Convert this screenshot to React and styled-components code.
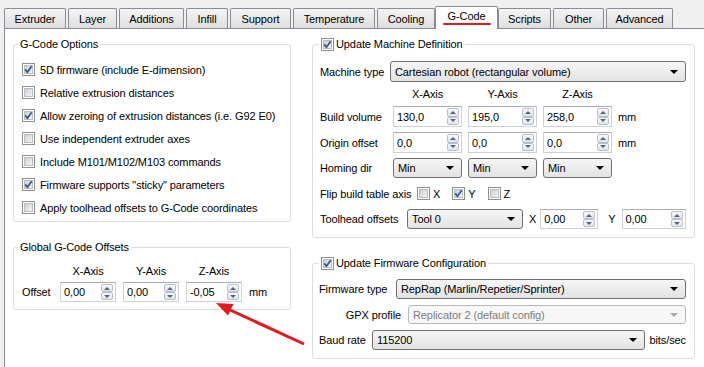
import React from "react";
import styled, { createGlobalStyle, css } from "styled-components";

const GlobalStyle = createGlobalStyle`
  html, body {
    margin: 0;
    background: #f0f0f0;
    font-family: "Liberation Sans", Arial, sans-serif;
    font-size: 11px;
    letter-spacing: -0.1px;
    color: #000;
  }
`;

const Window = styled.div`
  position: relative;
  width: 704px;
  height: 367px;
  overflow: hidden;
  background: #f0f0f0;
`;

const TabBar = styled.div`
  display: flex;
  align-items: flex-end;
  gap: 2px;
  height: 28px;
  padding-left: 4px;
`;

const Tab = styled.div`
  position: relative;
  flex: none;
  width: ${(p) => p.$w}px;
  height: 20px;
  box-sizing: border-box;
  border: 1px solid #898c95;
  border-bottom: none;
  border-radius: 2px 2px 0 0;
  background: linear-gradient(#f4f4f4, #e9e9e9 50%, #dedede);
  display: flex;
  align-items: center;
  justify-content: center;
  padding-top: 1px;
  ${(p) =>
    p.$active &&
    css`
      z-index: 2;
      width: ${p.$w + 4}px;
      height: 23px;
      margin: 0 -2px -1px;
      background: #fff;
      padding: 0 0 4px;
    `}
`;

const Mark = styled.span`
  position: absolute;
  left: 7px;
  right: 6px;
  bottom: 4px;
  height: 2px;
  border-radius: 1px;
  background: #e3191b;
`;

const Panel = styled.div`
  display: flex;
  align-items: flex-start;
  gap: 21px;
  width: 720px;
  height: 400px;
  box-sizing: border-box;
  margin-left: 4px;
  padding: 8px 0 0 8px;
  background: #fff;
  border: 1px solid #898c95;
`;

const Column = styled.div`
  flex: none;
  display: flex;
  flex-direction: column;
  gap: 18px;
  width: ${(p) => p.$w}px;
`;

const Group = styled.fieldset`
  margin: 0;
  min-width: 0;
  border: 1px solid #d5dfe5;
  border-radius: 3px;
  padding: ${(p) => p.$pad};
  display: flex;
  flex-direction: column;
  gap: ${(p) => p.$gap || 0}px;
`;

const Legend = styled.legend`
  display: flex;
  align-items: center;
  gap: 2px;
  height: 14px;
  line-height: 14px;
  padding: 0 2px;
  margin-left: ${(p) => p.$shift}px;
`;

const CheckRow = styled.div`
  display: flex;
  align-items: center;
  gap: 5px;
  height: 23px;
`;

const CheckSvg = styled.svg`
  flex: none;
  display: block;
`;

function Check({ on }) {
  return (
    <CheckSvg width="13" height="13" viewBox="0 0 13 13">
      <defs>
        <linearGradient id="ckfill" x1="0" y1="0" x2="1" y2="1">
          <stop offset="0" stopColor="#c9ccd1" />
          <stop offset="1" stopColor="#f7f7f7" />
        </linearGradient>
      </defs>
      <rect x="0.5" y="0.5" width="12" height="12" fill="#fff" stroke="#8e8f8f" />
      <rect x="2.5" y="2.5" width="8" height="8" fill="url(#ckfill)" stroke="#b9bcc1" />
      {on && (
        <path
          d="M3.3 6.4 L5.4 9.2 L9.7 3.3"
          fill="none"
          stroke="#3a5596"
          strokeWidth="1.8"
          strokeLinejoin="round"
        />
      )}
    </CheckSvg>
  );
}

const SpinBox = styled.div`
  flex: ${(p) => (p.$grow ? "1" : "none")};
  width: ${(p) => (p.$grow ? "auto" : `${p.$w}px`)};
  height: ${(p) => p.$h}px;
  box-sizing: border-box;
  display: flex;
  align-items: center;
  padding: 1px 1px 1px 3px;
  background: #fff;
  border: 1px solid #cdd1d7;
  border-top-color: #abadb3;
`;

const SpinValue = styled.span`
  flex: 1;
`;

const SpinArrows = styled.div`
  align-self: stretch;
  width: 12px;
  display: flex;
  flex-direction: column;
  margin-right: 1px;
`;

const SpinButton = styled.div`
  flex: 1;
  display: flex;
  align-items: center;
  justify-content: center;
  border: 1px solid #b9bfc8;
  border-radius: 2px;
  background: linear-gradient(#f7f9fb, #dfe5ec);
  &::after {
    content: "";
    border-left: 3px solid transparent;
    border-right: 3px solid transparent;
    ${(p) =>
      p.$down
        ? css`border-top: 3px solid #56657c;`
        : css`border-bottom: 3px solid #56657c;`}
  }
`;

function Spin({ w, h, value, grow }) {
  return (
    <SpinBox $w={w} $h={h} $grow={grow}>
      <SpinValue>{value}</SpinValue>
      <SpinArrows>
        <SpinButton />
        <SpinButton $down />
      </SpinArrows>
    </SpinBox>
  );
}

const SelectBox = styled.div`
  flex: ${(p) => (p.$grow ? "1" : "none")};
  width: ${(p) => (p.$grow ? "auto" : `${p.$w}px`)};
  height: ${(p) => p.$h}px;
  box-sizing: border-box;
  display: flex;
  align-items: center;
  padding: 0 7px 0 4px;
  border: 1px solid #707070;
  border-radius: 3px;
  background: linear-gradient(#f6f6f6, #e3e3e3);
  ${(p) =>
    p.$disabled &&
    css`
      border-color: #b5b9bd;
      background: #f7f7f7;
      color: #7d7d7d;
    `}
  &::after {
    content: "";
    border-left: 4px solid transparent;
    border-right: 4px solid transparent;
    border-top: 4px solid ${(p) => (p.$disabled ? "#a8a8a8" : "#000")};
  }
`;

const SelectText = styled.span`
  flex: 1;
  white-space: nowrap;
`;

function Select({ w, h, grow, disabled, children }) {
  return (
    <SelectBox $w={w} $h={h} $grow={grow} $disabled={disabled}>
      <SelectText>{children}</SelectText>
    </SelectBox>
  );
}

const AxisGrid = styled.div`
  display: grid;
  grid-template-columns: ${(p) => p.$cols};
  grid-template-rows: ${(p) => p.$rows};
  column-gap: ${(p) => p.$colGap}px;
  row-gap: ${(p) => p.$rowGap}px;
  align-items: center;
`;

const AxisHead = styled.span`
  text-align: center;
`;

const FormRow = styled.div`
  display: flex;
  align-items: center;
  height: ${(p) => p.$h}px;
  gap: ${(p) => p.$gap || 0}px;
`;

const FieldLabel = styled.span`
  flex: none;
  width: ${(p) => p.$w}px;
  text-align: ${(p) => (p.$right ? "right" : "left")};
  padding-right: ${(p) => (p.$right ? 7 : 0)}px;
  box-sizing: border-box;
  white-space: nowrap;
`;

const Inline = styled.span`
  flex: none;
  margin: 0 ${(p) => p.$mr || 0}px 0 ${(p) => p.$ml || 0}px;
`;

const FlipItem = styled.span`
  display: flex;
  align-items: center;
  gap: 3px;
  margin-right: 12px;
`;

const ArrowSvg = styled.svg`
  position: absolute;
  left: 0;
  top: 0;
  pointer-events: none;
`;

const tabs = [
  ["Extruder", 62],
  ["Layer", 49],
  ["Additions", 65],
  ["Infill", 42],
  ["Support", 61],
  ["Temperature", 82],
  ["Cooling", 58],
  ["G-Code", 59, true],
  ["Scripts", 53],
  ["Other", 51],
  ["Advanced", 67],
];

const options = [
  ["5D firmware (include E-dimension)", true],
  ["Relative extrusion distances", false],
  ["Allow zeroing of extrusion distances (i.e. G92 E0)", true],
  ["Use independent extruder axes", false],
  ["Include M101/M102/M103 commands", false],
  ['Firmware supports "sticky" parameters', true],
  ["Apply toolhead offsets to G-Code coordinates", false],
];

export default function App() {
  return (
    <Window>
      <GlobalStyle />
      <TabBar>
        {tabs.map(([label, w, active]) => (
          <Tab key={label} $w={w} $active={active}>
            {label}
            {active && <Mark />}
          </Tab>
        ))}
      </TabBar>

      <Panel>
        <Column $w={278}>
          <Group $pad="7px 8px 2px">
            <Legend $shift={-4}>G-Code Options</Legend>
            {options.map(([label, on]) => (
              <CheckRow key={label}>
                <Check on={on} />
                {label}
              </CheckRow>
            ))}
          </Group>

          <Group $pad="10px 8px 7px">
            <Legend $shift={-4}>Global G-Code Offsets</Legend>
            <AxisGrid $cols="31px 56px 56px 56px auto" $rows="14px 20px" $colGap={7} $rowGap={4}>
              <span />
              <AxisHead>X-Axis</AxisHead>
              <AxisHead>Y-Axis</AxisHead>
              <AxisHead>Z-Axis</AxisHead>
              <span />
              <span>Offset</span>
              <Spin w={56} h={20} value="0,00" />
              <Spin w={56} h={20} value="0,00" />
              <Spin w={56} h={20} value="-0,05" />
              <span>mm</span>
            </AxisGrid>
          </Group>
        </Column>

        <Column $w={383}>
          <Group $pad="10px 8px 8px 7px" $gap={5}>
            <Legend $shift={-1}>
              <Check on />
              Update Machine Definition
            </Legend>
            <FormRow $h={21}>
              <FieldLabel $w={70}>Machine type</FieldLabel>
              <Select h={21} grow>
                Cartesian robot (rectangular volume)
              </Select>
            </FormRow>
            <AxisGrid $cols="67px 69px 69px 69px auto" $rows="14px 21px 21px 20px" $colGap={6} $rowGap={5}>
              <span />
              <AxisHead>X-Axis</AxisHead>
              <AxisHead>Y-Axis</AxisHead>
              <AxisHead>Z-Axis</AxisHead>
              <span />
              <span>Build volume</span>
              <Spin w={69} h={21} value="130,0" />
              <Spin w={69} h={21} value="195,0" />
              <Spin w={69} h={21} value="258,0" />
              <span>mm</span>
              <span>Origin offset</span>
              <Spin w={69} h={21} value="0,0" />
              <Spin w={69} h={21} value="0,0" />
              <Spin w={69} h={21} value="0,0" />
              <span>mm</span>
              <span>Homing dir</span>
              <Select w={69} h={20}>Min</Select>
              <Select w={69} h={20}>Min</Select>
              <Select w={69} h={20}>Min</Select>
              <span />
            </AxisGrid>
            <FormRow $h={21}>
              <FieldLabel $w={97}>Flip build table axis</FieldLabel>
              <FlipItem>
                <Check />X
              </FlipItem>
              <FlipItem>
                <Check on />Y
              </FlipItem>
              <FlipItem>
                <Check />Z
              </FlipItem>
            </FormRow>
            <FormRow $h={20}>
              <FieldLabel $w={87}>Toolhead offsets</FieldLabel>
              <Select w={116} h={20}>Tool 0</Select>
              <Inline $ml={6} $mr={4}>X</Inline>
              <Spin w={58} h={20} value="0,00" />
              <Inline $ml={10} $mr={6}>Y</Inline>
              <Spin h={20} grow value="0,00" />
            </FormRow>
          </Group>

          <Group $pad="9px 8px 8px 6px" $gap={6}>
            <Legend $shift={0}>
              <Check on />
              Update Firmware Configuration
            </Legend>
            <FormRow $h={20}>
              <FieldLabel $w={77}>Firmware type</FieldLabel>
              <Select h={20} grow>
                RepRap (Marlin/Repetier/Sprinter)
              </Select>
            </FormRow>
            <FormRow $h={19}>
              <FieldLabel $w={89} $right>
                GPX profile
              </FieldLabel>
              <Select h={19} grow disabled>
                Replicator 2 (default config)
              </Select>
            </FormRow>
            <FormRow $h={20} $gap={5}>
              <FieldLabel $w={48}>Baud rate</FieldLabel>
              <Select h={20} grow>
                115200
              </Select>
              <span>bits/sec</span>
            </FormRow>
          </Group>
        </Column>
      </Panel>

      <ArrowSvg width="704" height="367" viewBox="0 0 704 367">
        <line x1="304" y1="344" x2="229" y2="309.5" stroke="#e3191b" strokeWidth="3" />
        <polygon points="216,303 233.5,304 228,315.5" fill="#e3191b" />
      </ArrowSvg>
    </Window>
  );
}
